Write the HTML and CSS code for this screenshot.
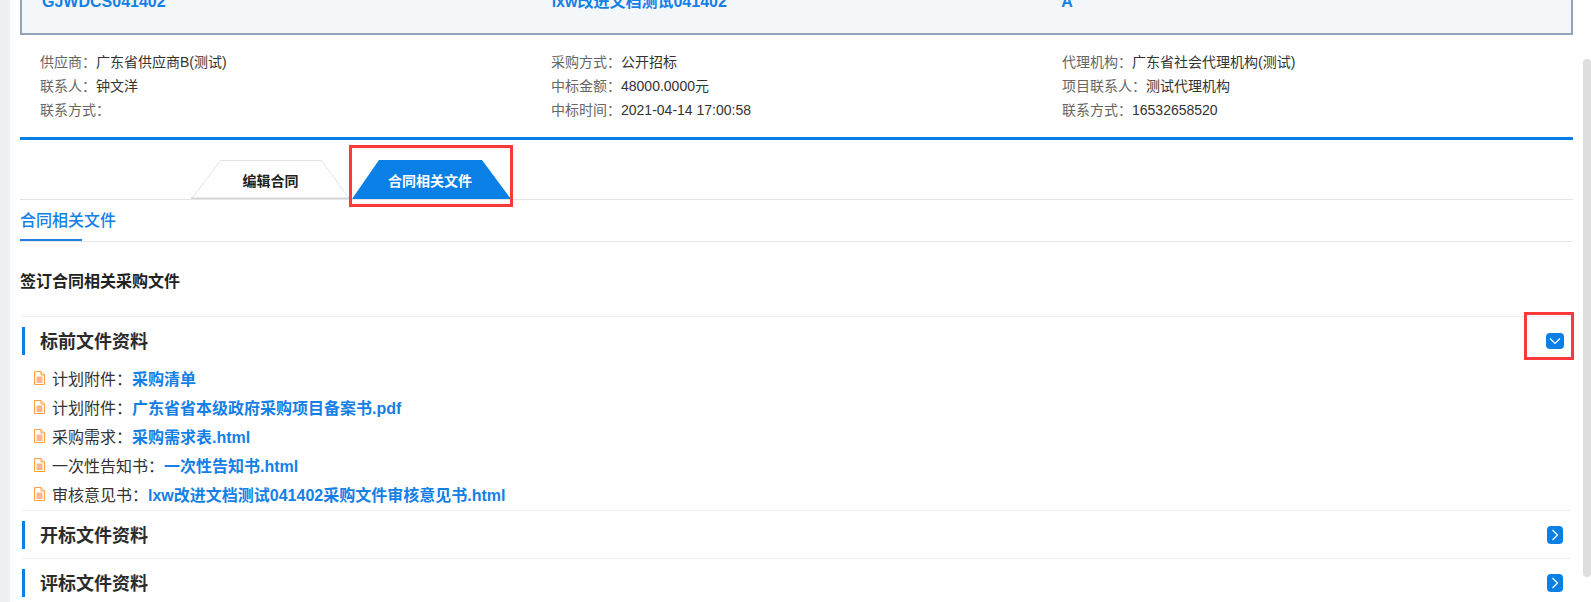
FILE: index.html
```html
<!DOCTYPE html>
<html lang="zh-CN">
<head>
    <meta charset="UTF-8">
    <meta name="viewport" content="width=device-width, initial-scale=1.0">
    <title>合同相关文件</title>
    <link rel="stylesheet" href="styles.css">
</head>
<body>
    <div class="page">
        <div class="side"></div>

        <div class="main">
            <div class="project-box">
                <div class="col">GJWDCS041402</div>
                <div class="col">lxw改进文档测试041402</div>
                <div class="col">A</div>
            </div>

            <div class="info">
                <div class="col">
                    <p><span class="label">供应商：</span>广东省供应商B(测试)</p>
                    <p><span class="label">联系人：</span>钟文洋</p>
                    <p><span class="label">联系方式：</span></p>
                </div>
                <div class="col">
                    <p><span class="label">采购方式：</span>公开招标</p>
                    <p><span class="label">中标金额：</span>48000.0000元</p>
                    <p><span class="label">中标时间：</span>2021-04-14 17:00:58</p>
                </div>
                <div class="col">
                    <p><span class="label">代理机构：</span>广东省社会代理机构(测试)</p>
                    <p><span class="label">项目联系人：</span>测试代理机构</p>
                    <p><span class="label">联系方式：</span>16532658520</p>
                </div>
            </div>

            <div class="tabs">
                <div class="tab">
                    <svg class="tab-shape" viewBox="0 0 159 39" preserveAspectRatio="none">
                        <path d="M0.5 39 L29.5 0.5 H130.5 L158.5 39" fill="#fff" stroke="#e2e2e2"/>
                        <path d="M0 38.5 H159" stroke="#d6d6d6" stroke-width="2"/>
                    </svg>
                    <span>编辑合同</span>
                </div>
                <div class="tab tab-active">
                    <span>合同相关文件</span>
                    <div class="mark mark-tab"></div>
                </div>
            </div>

            <div class="subtabs">
                <div class="subtab">合同相关文件</div>
            </div>

            <h2 class="heading">签订合同相关采购文件</h2>

            <div class="section">
                <div class="section-head">
                    <h3>标前文件资料</h3>
                    <span class="toggle toggle-open">
                        <svg viewBox="0 0 18 16"><path d="M4 5.5 L9 10.5 L14 5.5" fill="none" stroke="#fff" stroke-width="1.2"/></svg>
                    </span>
                    <div class="mark mark-toggle"></div>
                </div>
                <ul class="files">
                    <li>
                        <svg class="file-icon" viewBox="0 0 11 14"><path d="M0.5 0.5 H7 L10.5 4 V13.5 H0.5 Z M7 0.5 V4 H10.5" fill="#fff" stroke="#ff9f40"/><path d="M2.5 5.5 H8.5 V12 H2.5 Z" fill="#ffb493"/></svg>
                        计划附件：<a href="#">采购清单</a>
                    </li>
                    <li>
                        <svg class="file-icon" viewBox="0 0 11 14"><path d="M0.5 0.5 H7 L10.5 4 V13.5 H0.5 Z M7 0.5 V4 H10.5" fill="#fff" stroke="#ff9f40"/><path d="M2.5 5.5 H8.5 V12 H2.5 Z" fill="#ffb493"/></svg>
                        计划附件：<a href="#">广东省省本级政府采购项目备案书.pdf</a>
                    </li>
                    <li>
                        <svg class="file-icon" viewBox="0 0 11 14"><path d="M0.5 0.5 H7 L10.5 4 V13.5 H0.5 Z M7 0.5 V4 H10.5" fill="#fff" stroke="#ff9f40"/><path d="M2.5 5.5 H8.5 V12 H2.5 Z" fill="#ffb493"/></svg>
                        采购需求：<a href="#">采购需求表.html</a>
                    </li>
                    <li>
                        <svg class="file-icon" viewBox="0 0 11 14"><path d="M0.5 0.5 H7 L10.5 4 V13.5 H0.5 Z M7 0.5 V4 H10.5" fill="#fff" stroke="#ff9f40"/><path d="M2.5 5.5 H8.5 V12 H2.5 Z" fill="#ffb493"/></svg>
                        一次性告知书：<a href="#">一次性告知书.html</a>
                    </li>
                    <li>
                        <svg class="file-icon" viewBox="0 0 11 14"><path d="M0.5 0.5 H7 L10.5 4 V13.5 H0.5 Z M7 0.5 V4 H10.5" fill="#fff" stroke="#ff9f40"/><path d="M2.5 5.5 H8.5 V12 H2.5 Z" fill="#ffb493"/></svg>
                        审核意见书：<a href="#">lxw改进文档测试041402采购文件审核意见书.html</a>
                    </li>
                </ul>
            </div>

            <div class="section">
                <div class="section-head">
                    <h3>开标文件资料</h3>
                    <span class="toggle">
                        <svg viewBox="0 0 16 18"><path d="M5.5 4 L10.5 9 L5.5 14" fill="none" stroke="#fff" stroke-width="1.2"/></svg>
                    </span>
                </div>
            </div>

            <div class="section">
                <div class="section-head">
                    <h3>评标文件资料</h3>
                    <span class="toggle">
                        <svg viewBox="0 0 16 18"><path d="M5.5 4 L10.5 9 L5.5 14" fill="none" stroke="#fff" stroke-width="1.2"/></svg>
                    </span>
                </div>
            </div>
        </div>

        <div class="scrollbar">
            <div class="scroll-thumb"></div>
        </div>
    </div>
</body>
</html>
```

FILE: styles.css
```css
:root {
    --primary-color: #0a80e6;
    --text-color: #333;
    --label-color: #666;
    --line-color: #eceef3;
    --mark-color: #f93a3a;
}

* {
    margin: 0;
    padding: 0;
    box-sizing: border-box;
}

body {
    font-family: 'Liberation Sans', 'Noto Sans CJK SC', sans-serif;
    background-color: #fff;
    color: var(--text-color);
    overflow: hidden;
}

.page {
    display: flex;
    height: 602px;
    overflow: hidden;
}

.side {
    width: 10px;
    flex-shrink: 0;
    background-color: #edf1f4;
}

.main {
    width: 1563px;
    flex-shrink: 0;
    padding-left: 10px;
}

.scrollbar {
    width: 18px;
    padding-left: 10px;
}

.scroll-thumb {
    width: 8px;
    height: 518px;
    margin-top: 59px;
    background-color: #dedede;
    border-radius: 4px;
}

/* page is scrolled, so the top of this box is cut off */
.project-box {
    display: flex;
    height: 55px;
    margin-top: -20px;
    padding: 10px 0 0 20px;
    background-color: #f4f7fa;
    border: 2px solid #94a3b8;
    color: #1480e6;
    font-size: 16px;
    font-weight: bold;
    line-height: 20px;
}

.project-box .col {
    width: 511px;
}

.info {
    display: flex;
    padding: 15px 0 15px 20px;
    border-bottom: 3px solid var(--primary-color);
    font-size: 14px;
}

.info .col {
    width: 511px;
}

.info p {
    line-height: 24px;
}

.label {
    color: var(--label-color);
}

.tabs {
    display: flex;
    gap: 2px;
    height: 40px;
    margin-top: 20px;
    padding-left: 171px;
    border-bottom: 1px solid #e4e4e4;
}

.tab {
    position: relative;
    display: flex;
    align-items: center;
    justify-content: center;
    width: 159px;
    height: 39px;
    color: #222;
    font-size: 14px;
    font-weight: bold;
}

.tab span {
    position: relative;
}

.tab-shape {
    position: absolute;
    top: 0;
    left: 0;
    width: 100%;
    height: 100%;
}

.tab-active {
    color: #fff;
}

.tab-active span {
    margin-right: 3px;
}

.tab-active::before {
    content: "";
    position: absolute;
    top: 0;
    left: 0;
    width: 100%;
    height: 100%;
    background-color: var(--primary-color);
    clip-path: polygon(0 100%, 27px 0, 130px 0, 100% 100%);
}

.mark {
    position: absolute;
    border: 3px solid var(--mark-color);
}

.mark-tab {
    top: -15px;
    left: -3px;
    width: 164px;
    height: 62px;
}

.subtabs {
    height: 42px;
    border-bottom: 1px solid #e4e6ea;
}

.subtab {
    padding-top: 2px;
    color: #1480e6;
    font-size: 16px;
    font-weight: 500;
    line-height: 37px;
}

.subtab::after {
    content: "";
    display: block;
    width: 62px;
    height: 2px;
    background-color: #1f82e0;
}

.heading {
    margin-top: 26px;
    margin-bottom: 20px;
    color: #222;
    font-size: 16px;
    font-weight: bold;
    line-height: 28px;
}

.section {
    margin: 0 2px;
    padding: 10px 0 9px;
    border-top: 1px solid var(--line-color);
}

.section-head {
    position: relative;
    display: flex;
    align-items: center;
    justify-content: space-between;
    height: 28px;
    padding-left: 15px;
    padding-right: 8px;
    border-left: 3px solid var(--primary-color);
}

.section-head h3 {
    padding-bottom: 2px;
    color: #2b2b2b;
    font-size: 18px;
    font-weight: bold;
}

.toggle {
    display: flex;
    width: 16px;
    height: 18px;
    background-color: var(--primary-color);
    border-radius: 4px;
}

.toggle-open {
    width: 18px;
    height: 16px;
    margin-right: -1px;
}

.toggle svg {
    display: block;
    width: 100%;
    height: 100%;
}

.mark-toggle {
    top: -15px;
    right: -3px;
    width: 50px;
    height: 48px;
}

.files {
    margin-top: 8px;
    margin-bottom: -7px;
    padding-left: 12px;
    list-style: none;
    font-size: 16px;
}

.files li {
    display: flex;
    align-items: center;
    height: 29px;
    color: #333;
}

.file-icon {
    width: 11px;
    height: 14px;
    margin-right: 7px;
    flex-shrink: 0;
}

.files a {
    color: #1480e6;
    font-weight: bold;
    text-decoration: none;
}
```
